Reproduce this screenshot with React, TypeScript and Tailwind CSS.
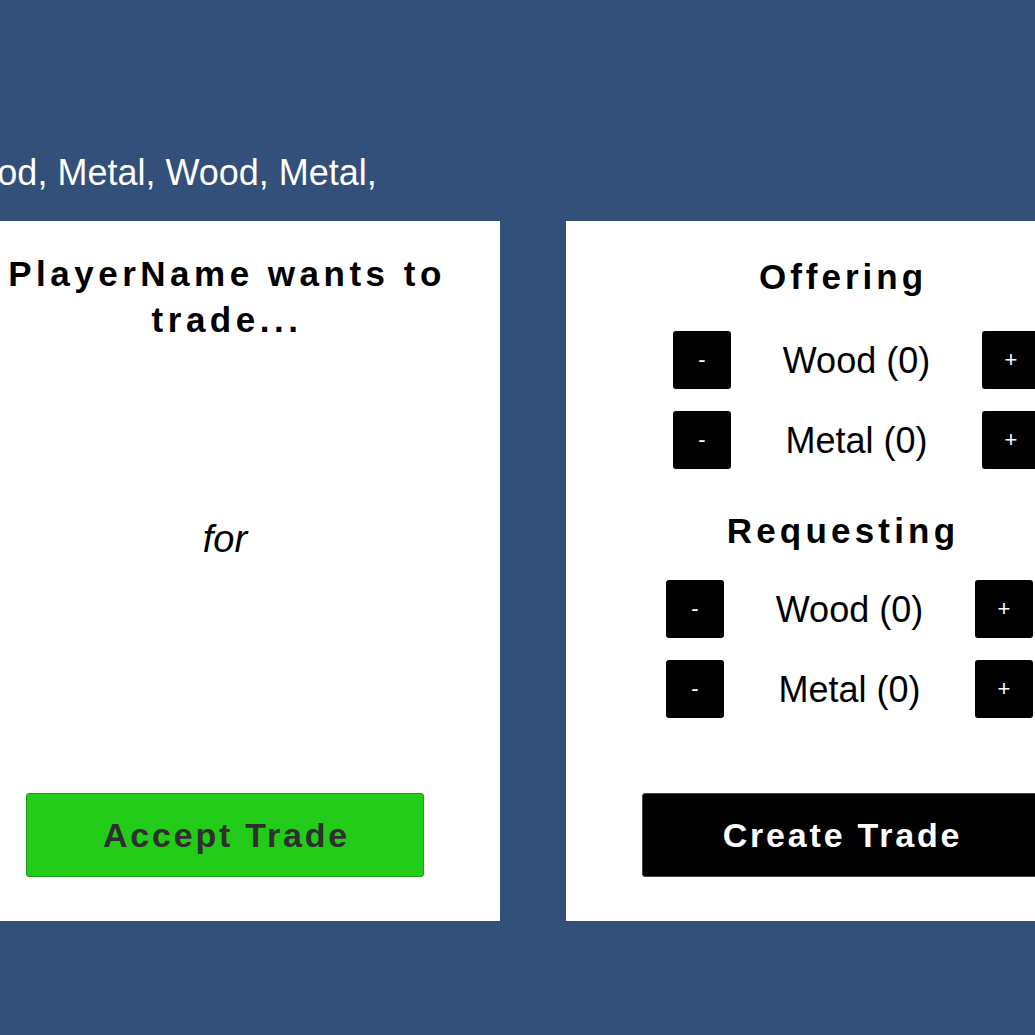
import React from 'react';

function StepButton({ label }: { label: string }) {
  return (
    <div className="flex h-[58px] w-[58px] shrink-0 items-center justify-center rounded-[3px] bg-black text-[22px] leading-none text-white">
      {label}
    </div>
  );
}

function ResourceRow({ name, count, className }: { name: string; count: number; className: string }) {
  return (
    <div className={`flex w-[367px] items-center self-start ${className}`}>
      <StepButton label="-" />
      <div className="flex-1 pt-[2px] text-center text-[36px] leading-none text-black">
        {name} ({count})
      </div>
      <StepButton label="+" />
    </div>
  );
}

export default function App() {
  const resources = ['Wood', 'Metal'];

  return (
    <div className="h-[1035px] w-full overflow-hidden bg-[#32507a] pt-[155px] font-['Liberation_Sans',Arial,sans-serif]">
      <div className="ml-[-56px] whitespace-nowrap text-[36px] leading-none text-white">
        Wood, Metal, Wood, Metal,
      </div>

      <div className="ml-[-50px] mt-[30px] flex gap-[66px]">
        {/* incoming trade */}
        <div className="flex h-[700px] w-[550px] shrink-0 flex-col items-center bg-white pt-[30px]">
          <div className="w-full pl-[4px] text-center text-[35px] font-bold leading-[46px] tracking-[4.5px] text-black">
            PlayerName wants to
            <br />
            trade...
          </div>
          <div className="mt-[177px] text-[38px] italic leading-none text-black">for</div>
          <button className="mb-[44px] mt-auto flex h-[84px] w-[398px] items-center justify-center rounded-[3px] border border-[#1e9c16] bg-[#23cc18] pl-[3px] text-[34px] font-bold tracking-[2.8px] text-[#2f2f2f]">
            Accept Trade
          </button>
        </div>

        {/* new trade */}
        <div className="flex h-[700px] w-[550px] shrink-0 flex-col items-center bg-white pt-[38px]">
          <div className="pl-[4px] text-[35px] font-bold leading-none tracking-[4px] text-black">Offering</div>
          <div className="mt-[37px] flex w-full flex-col gap-[22px]">
            {resources.map((r) => (
              <ResourceRow key={r} name={r} count={0} className="ml-[107px]" />
            ))}
          </div>
          <div className="mt-[44px] pl-[4px] text-[35px] font-bold leading-none tracking-[4.2px] text-black">
            Requesting
          </div>
          <div className="mt-[32px] flex w-full flex-col gap-[22px]">
            {resources.map((r) => (
              <ResourceRow key={r} name={r} count={0} className="ml-[100px]" />
            ))}
          </div>
          <button className="mb-[44px] mt-auto flex h-[84px] w-[398px] items-center justify-center rounded-[3px] border border-[#444] bg-black pl-[3px] text-[34px] font-bold tracking-[2.8px] text-white">
            Create Trade
          </button>
        </div>
      </div>
    </div>
  );
}
